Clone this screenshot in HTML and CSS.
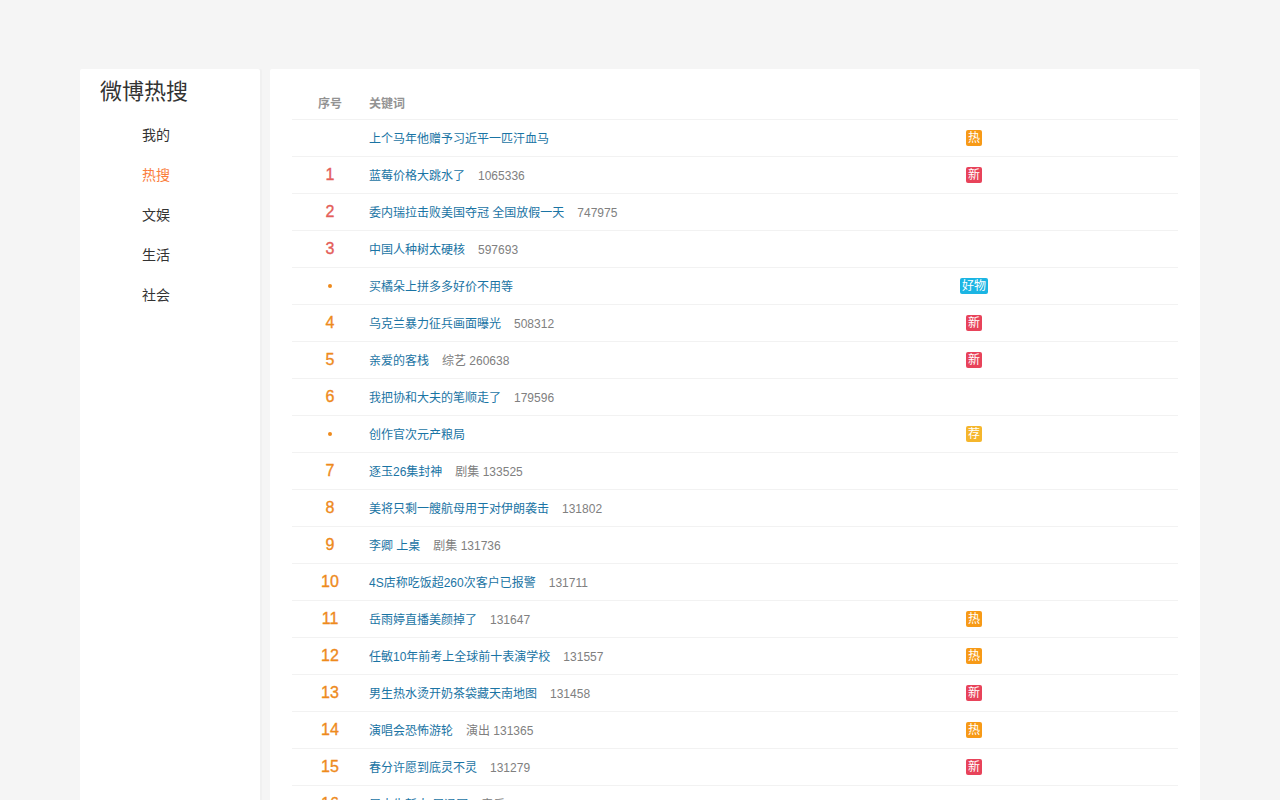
FILE: index.html
```html
<!DOCTYPE html>
<html lang="zh">
<head>
<meta charset="utf-8">
<title>微博热搜</title>
<link rel="stylesheet" href="styles.css">
</head>
<body>
<div class="wrap">
  <aside class="side">
    <h1 class="title">微博热搜</h1>
    <ul class="nav">
      <li class="nav-item">我的</li>
      <li class="nav-item active">热搜</li>
      <li class="nav-item">文娱</li>
      <li class="nav-item">生活</li>
      <li class="nav-item">社会</li>
    </ul>
  </aside>
  <main class="main">
    <table class="list">
      <thead>
        <tr><th class="c-rank">序号</th><th class="c-kw">关键词</th><th class="c-ic"></th><th class="c-rest"></th></tr>
      </thead>
      <tbody>
        <tr><td class="c-rank"></td><td class="c-kw"><a class="kw">上个马年他赠予习近平一匹汗血马</a></td><td class="c-ic"><i class="tag hot">热</i></td><td></td></tr>
        <tr><td class="c-rank top">1</td><td class="c-kw"><a class="kw">蓝莓价格大跳水了</a><span class="num">1065336</span></td><td class="c-ic"><i class="tag new">新</i></td><td></td></tr>
        <tr><td class="c-rank top">2</td><td class="c-kw"><a class="kw">委内瑞拉击败美国夺冠 全国放假一天</a><span class="num">747975</span></td><td class="c-ic"></td><td></td></tr>
        <tr><td class="c-rank top">3</td><td class="c-kw"><a class="kw">中国人种树太硬核</a><span class="num">597693</span></td><td class="c-ic"></td><td></td></tr>
        <tr><td class="c-rank"><i class="dot"></i></td><td class="c-kw"><a class="kw">买橘朵上拼多多好价不用等</a></td><td class="c-ic"><i class="tag good">好物</i></td><td></td></tr>
        <tr><td class="c-rank">4</td><td class="c-kw"><a class="kw">乌克兰暴力征兵画面曝光</a><span class="num">508312</span></td><td class="c-ic"><i class="tag new">新</i></td><td></td></tr>
        <tr><td class="c-rank">5</td><td class="c-kw"><a class="kw">亲爱的客栈</a><span class="num">综艺 260638</span></td><td class="c-ic"><i class="tag new">新</i></td><td></td></tr>
        <tr><td class="c-rank">6</td><td class="c-kw"><a class="kw">我把协和大夫的笔顺走了</a><span class="num">179596</span></td><td class="c-ic"></td><td></td></tr>
        <tr><td class="c-rank"><i class="dot"></i></td><td class="c-kw"><a class="kw">创作官次元产粮局</a></td><td class="c-ic"><i class="tag rec">荐</i></td><td></td></tr>
        <tr><td class="c-rank">7</td><td class="c-kw"><a class="kw">逐玉26集封神</a><span class="num">剧集 133525</span></td><td class="c-ic"></td><td></td></tr>
        <tr><td class="c-rank">8</td><td class="c-kw"><a class="kw">美将只剩一艘航母用于对伊朗袭击</a><span class="num">131802</span></td><td class="c-ic"></td><td></td></tr>
        <tr><td class="c-rank">9</td><td class="c-kw"><a class="kw">李卿 上桌</a><span class="num">剧集 131736</span></td><td class="c-ic"></td><td></td></tr>
        <tr><td class="c-rank">10</td><td class="c-kw"><a class="kw">4S店称吃饭超260次客户已报警</a><span class="num">131711</span></td><td class="c-ic"></td><td></td></tr>
        <tr><td class="c-rank">11</td><td class="c-kw"><a class="kw">岳雨婷直播美颜掉了</a><span class="num">131647</span></td><td class="c-ic"><i class="tag hot">热</i></td><td></td></tr>
        <tr><td class="c-rank">12</td><td class="c-kw"><a class="kw">任敏10年前考上全球前十表演学校</a><span class="num">131557</span></td><td class="c-ic"><i class="tag hot">热</i></td><td></td></tr>
        <tr><td class="c-rank">13</td><td class="c-kw"><a class="kw">男生热水烫开奶茶袋藏天南地图</a><span class="num">131458</span></td><td class="c-ic"><i class="tag new">新</i></td><td></td></tr>
        <tr><td class="c-rank">14</td><td class="c-kw"><a class="kw">演唱会恐怖游轮</a><span class="num">演出 131365</span></td><td class="c-ic"><i class="tag hot">热</i></td><td></td></tr>
        <tr><td class="c-rank">15</td><td class="c-kw"><a class="kw">春分许愿到底灵不灵</a><span class="num">131279</span></td><td class="c-ic"><i class="tag new">新</i></td><td></td></tr>
        <tr><td class="c-rank">16</td><td class="c-kw"><a class="kw">周大生新人 周迅同</a><span class="num">音乐 131134</span></td><td class="c-ic"></td><td></td></tr>
      </tbody>
    </table>
  </main>
</div>
</body>
</html>
```

FILE: styles.css
```css
html, body {
  margin: 0;
  padding: 0;
  background: #f5f5f5;
  font-family: "Liberation Sans", Arial, "Noto Sans CJK SC", sans-serif;
  color: #333;
  height: 800px;
  overflow: hidden;
}

.wrap {
  width: 1120px;
  margin: 0 auto;
  padding-top: 69px;
  display: flex;
  gap: 10px;
  align-items: stretch;
  height: 731px;
}

.side {
  width: 180px;
  flex: none;
  background: #fff;
  border-radius: 2px 2px 0 0;
  box-shadow: 2px 0 0 #f0f0f0;
}

.title {
  margin: 0;
  padding-left: 20px;
  font-size: 22px;
  font-weight: normal;
  line-height: 44px;
  color: #333;
  padding-top: 1px;
}

.nav {
  list-style: none;
  margin: 0;
  padding: 1px 0 0 0;
}

.nav-item {
  padding-left: 62px;
  height: 40px;
  line-height: 40px;
  font-size: 14px;
  color: #333;
}

.nav-item.active {
  color: #fa7d3c;
}

.main {
  flex: 1;
  background: #fff;
  border-radius: 2px 2px 0 0;
  padding: 17px 22px 0 22px;
  overflow: hidden;
}

.list {
  width: 886px;
  border-collapse: collapse;
  table-layout: fixed;
}

.list th {
  height: 33px;
  font-size: 12px;
  font-weight: bold;
  color: #939393;
  text-align: left;
  padding: 0;
  border-bottom: 1px solid #f2f2f2;
}

.list th.c-kw {
  padding-left: 1px;
}

.list td {
  height: 36px;
  padding: 0;
  border-bottom: 1px solid #f2f2f2;
  font-size: 12px;
  vertical-align: middle;
}

.list td.c-kw {
  padding-left: 1px;
  padding-bottom: 2px;
  height: 34px;
}

.list td.c-ic {
  padding-right: 2px;
}

.c-rank {
  width: 76px;
  text-align: center !important;
  font-family: "Liberation Sans", Arial, sans-serif;
  font-size: 16px !important;
  font-weight: normal;
  color: #ee8a1c;
  -webkit-text-stroke: 0.35px currentColor;
}

.list th.c-rank {
  font-size: 12px !important;
  font-weight: bold;
  color: #939393;
  font-family: "Liberation Sans", Arial, "Noto Sans CJK SC", sans-serif;
  -webkit-text-stroke: 0;
}

.c-rank.top {
  color: #e45d59;
}

.c-kw {
  width: 572px;
}

.c-ic {
  width: 68px;
  text-align: center;
}

.kw {
  color: #1a74a4;
  text-decoration: none;
}

.num {
  margin-left: 13px;
  color: #808080;
}

.dot {
  display: inline-block;
  width: 4px;
  height: 4px;
  border-radius: 50%;
  background: #ee8a1c;
  vertical-align: middle;
  margin-bottom: 2px;
}

.tag {
  display: inline-block;
  min-width: 16px;
  height: 16px;
  line-height: 16px;
  padding: 0 0;
  box-sizing: border-box;
  border-radius: 2px;
  font-style: normal;
  font-weight: normal;
  font-size: 12px;
  color: #fff;
  text-align: center;
  vertical-align: middle;
}

.tag.hot { background: #f79a17; }
.tag.new { background: #e8435a; }
.tag.good { background: #1bb5e3; padding: 0 2px; }
.tag.rec { background: #f5b62c; }
```
